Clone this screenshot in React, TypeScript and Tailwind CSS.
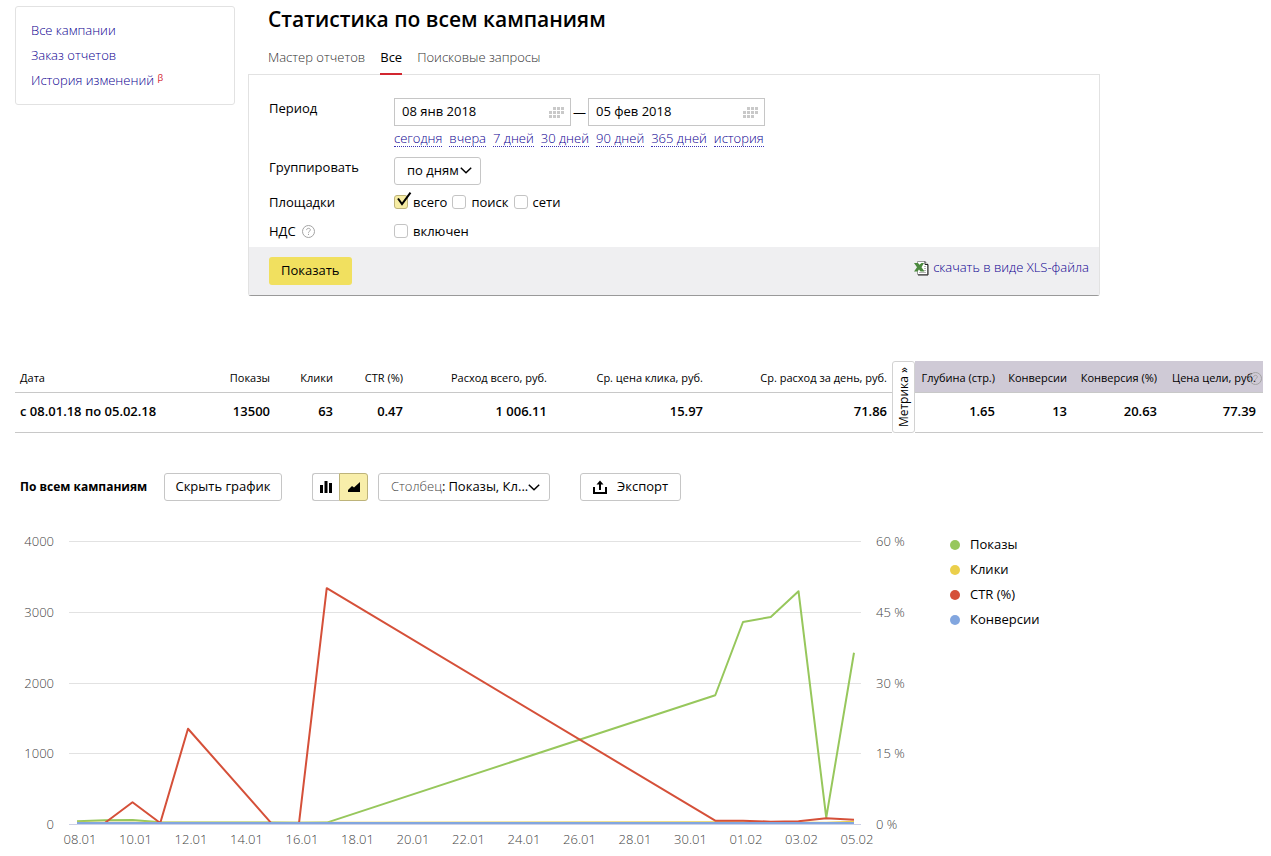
import { useState } from 'react'
import type { ReactNode } from 'react'
import clsx from 'clsx'

type Point = [day: number, value: number]

type Series = {
    name: string
    color: string
    dot: string
    max: number
    points: Point[]
}

// day 0 is 08.01, days without data are skipped
const series: Series[] = [
    {
        name: 'Показы',
        color: '#97c75c',
        dot: 'bg-[#97c75c]',
        max: 4000,
        points: [[0, 38], [1, 52], [2, 58], [3, 24], [4, 20], [7, 20], [8, 16], [9, 20], [23, 1820], [24, 2855], [25, 2926], [26, 3290], [27, 90], [28, 2420]],
    },
    {
        name: 'Клики',
        color: '#ebcf4b',
        dot: 'bg-[#ebcf4b]',
        max: 4000,
        points: [[0, 16], [8, 16], [9, 18], [23, 24], [27, 18], [28, 32]],
    },
    {
        name: 'CTR (%)',
        color: '#d55039',
        dot: 'bg-[#d55039]',
        max: 60,
        points: [[0, 0.2], [1, 0.2], [2, 4.6], [3, 0.2], [4, 20.2], [7, 0.2], [8, 0.2], [9, 50], [23, 0.7], [24, 0.7], [25, 0.5], [26, 0.6], [27, 1.2], [28, 0.9]],
    },
    {
        name: 'Конверсии',
        color: '#82a6df',
        dot: 'bg-[#82a6df]',
        max: 4000,
        points: [[0, 14], [28, 14]],
    },
]

const leftTicks = ['0', '1000', '2000', '3000', '4000']
const rightTicks = ['0 %', '15 %', '30 %', '45 %', '60 %']
const dates = ['08.01', '10.01', '12.01', '14.01', '16.01', '18.01', '20.01', '22.01', '24.01', '26.01', '28.01', '30.01', '01.02', '03.02', '05.02']

const periods = ['сегодня', 'вчера', '7 дней', '30 дней', '90 дней', '365 дней', 'история']

const columns = [
    { title: 'Показы', value: '13500' },
    { title: 'Клики', value: '63' },
    { title: 'CTR (%)', value: '0.47' },
    { title: 'Расход всего, руб.', value: '1 006.11' },
    { title: 'Ср. цена клика, руб.', value: '15.97' },
    { title: 'Ср. расход за день, руб.', value: '71.86' },
]

const metrikaColumns = [
    { title: 'Глубина (стр.)', value: '1.65' },
    { title: 'Конверсии', value: '13' },
    { title: 'Конверсия (%)', value: '20.63' },
    { title: 'Цена цели, руб.', value: '77.39' },
]

function HelpIcon() {
    return (
        <svg className="size-[13px]" viewBox="0 0 13 13" fill="none" stroke="#a3a3a3" aria-hidden="true">
            <circle cx="6.5" cy="6.5" r="6" />
            <path d="M4.6 5.1c0-1.1.8-1.8 1.9-1.8s1.9.7 1.9 1.6c0 1.3-1.9 1.4-1.9 2.8M6.5 8.8v1.2" />
        </svg>
    )
}

function Chevron() {
    return (
        <svg className="pointer-events-none absolute right-[9px] top-[10px] h-[7px] w-[12px]" viewBox="0 0 12 7" fill="none" stroke="#000" strokeWidth="1.5" aria-hidden="true">
            <path d="M.8.8 6 5.8 11.2.8" />
        </svg>
    )
}

function CalendarIcon() {
    return (
        <svg className="pointer-events-none absolute right-[7px] top-[9px] h-[11px] w-[15px]" viewBox="0 0 15 11" aria-hidden="true" fill="#c9c9c9">
            {[4, 8, 12].map((x) => <rect key={x} x={x} y="0" width="3" height="3" />)}
            {[0, 4, 8, 12].map((x) => <rect key={x} x={x} y="4" width="3" height="3" />)}
            {[0, 4, 8].map((x) => <rect key={x} x={x} y="8" width="3" height="3" />)}
        </svg>
    )
}

function XlsIcon() {
    return (
        <svg className="mt-[3px] h-[15px] w-[15px]" viewBox="0 0 15 15" aria-hidden="true">
            <path d="M3.5.5H11L13.500 3v10.500h-10z" fill="#fff" stroke="#9a9a9a" />
            <path d="M11 .5V3.500h3M14 3.500V14H4" fill="none" stroke="#222" />
            <path d="M10 5.500h2M10 7.500h2M9.500 9.500H12M5 11.500h7" stroke="#b5b5b5" />
            <path d="M0 2h4l1.500 1.800L7.500 2H10L7.500 6.200 10.500 10.500H6.500L5 8.600 3.500 10.500H0l3-4.300z" fill="#4c8a3f" />
        </svg>
    )
}

function DateField({ label, value }: { label: string; value: string }) {
    return (
        <span className="relative">
            <input
                type="text"
                aria-label={label}
                defaultValue={value}
                className="block h-7 w-[177px] border border-[#c6c6c6] bg-white pb-0.5 pl-[7px] pr-7 outline-none"
            />
            <CalendarIcon />
        </span>
    )
}

function Checkbox({ label, checked = false }: { label: string; checked?: boolean }) {
    const [on, setOn] = useState(checked)
    return (
        <label className="relative flex items-center gap-[5px]">
            <input
                type="checkbox"
                checked={on}
                onChange={(e) => setOn(e.target.checked)}
                className="size-3.5 appearance-none rounded-[3px] border border-[#c4c4c4] bg-white checked:border-[#bdb37a] checked:bg-[#f6eca4]"
            />
            {on && (
                <svg className="pointer-events-none absolute left-[3px] top-0 h-[15px] w-[15px]" viewBox="0 0 15 15" fill="none" stroke="#000" strokeWidth="2" aria-hidden="true">
                    <path d="M1 6.500 5 12 13.500.6" />
                </svg>
            )}
            {label}
        </label>
    )
}

function FormRow({ label, children, className }: { label: ReactNode; children: ReactNode; className?: string }) {
    return (
        <div className={clsx('flex', className)}>
            <div className="w-[125px] shrink-0">{label}</div>
            {children}
        </div>
    )
}

const px = (day: number) => 57 + day * 27.75
const py = (value: number, max: number) => 294 - (value / max) * 283

function Chart() {
    return (
        <svg className="w-full max-w-[900px]" viewBox="0 0 900 320" role="img" aria-label="Статистика по всем кампаниям">
            <g stroke="#e2e2e2">
                {leftTicks.map((tick, i) => (
                    <line key={tick} x1="49" x2="841" y1={Math.round(py(i, 4)) + 0.5} y2={Math.round(py(i, 4)) + 0.5} />
                ))}
            </g>
            <line x1="49" x2="841" y1="294.5" y2="294.5" stroke="#ccd0e6" />
            <g fill="none" strokeWidth="2" strokeLinejoin="round">
                {series.map((s) => (
                    <polyline key={s.name} stroke={s.color} points={s.points.map(([d, v]) => `${px(d)},${py(v, s.max)}`).join(' ')} />
                ))}
            </g>
            <g className="font-light" fill="#444" fontSize="13">
                {leftTicks.map((tick, i) => (
                    <text key={tick} x="34" y={Math.round(py(i, 4)) + 5} textAnchor="end">{tick}</text>
                ))}
                {rightTicks.map((tick, i) => (
                    <text key={tick} x="856" y={Math.round(py(i, 4)) + 5}>{tick}</text>
                ))}
                {dates.map((date, i) => (
                    <text key={date} x={px(i * 2) + 3} y="314" textAnchor="middle">{date}</text>
                ))}
            </g>
        </svg>
    )
}

function StatsTable() {
    return (
        <table className="w-full table-fixed border-separate border-spacing-0 text-right">
            <colgroup>
                <col />
                <col className="w-[60px]" />
                <col className="w-[63px]" />
                <col className="w-[70px]" />
                <col className="w-[144px]" />
                <col className="w-[156px]" />
                <col className="w-[184px]" />
                <col className="w-[23px]" />
                <col className="w-[85px]" />
                <col className="w-[72px]" />
                <col className="w-[90px]" />
                <col className="w-[101px]" />
            </colgroup>
            <tbody>
                <tr className="h-8 whitespace-nowrap text-[11px] [&>th]:border-b [&>th]:border-[#c8c8c8] [&>th]:pt-0.5 [&>th]:font-normal">
                    <th scope="col" className="px-[5px] text-left">Дата</th>
                    {columns.map((c) => (
                        <th key={c.title} scope="col" className="pr-[5px]">{c.title}</th>
                    ))}
                    <td rowSpan={2} className="p-0">
                        <button type="button" className="flex h-[72px] w-[23px] items-center justify-center rounded-[3px] border border-[#d2d2d2] bg-white text-xs">
                            <span className="rotate-180 [writing-mode:vertical-rl]">Метрика »</span>
                        </button>
                    </td>
                    {metrikaColumns.map((c, i) => (
                        <th key={c.title} scope="col" className="relative bg-[#cfcad6] pr-[5px] last:pr-[7px]">
                            {c.title}
                            {i === metrikaColumns.length - 1 && (
                                <span className="absolute right-px top-[11px]"><HelpIcon /></span>
                            )}
                        </th>
                    ))}
                </tr>
                <tr className="h-10 whitespace-nowrap font-semibold [&>td]:border-b [&>td]:border-[#c8c8c8] [&>td]:pb-1">
                    <td className="pl-[5px] text-left">с 08.01.18 по 05.02.18</td>
                    {[...columns, ...metrikaColumns].map((c) => (
                        <td key={c.title} className="pr-[5px] last:pr-[7px]">{c.value}</td>
                    ))}
                </tr>
            </tbody>
        </table>
    )
}

export default function App() {
    const [view, setView] = useState<'bar' | 'area'>('area')

    return (
        <div className="pl-[15px] pr-2 pt-1.5 font-['Open_Sans','Noto_Sans',sans-serif] text-[13px] leading-5 text-black">
            <div className="flex items-start gap-[13px]">
                <nav className="flex w-[220px] shrink-0 flex-col items-start rounded-[3px] border border-[#e2e2e2] px-[15px] pb-[11px] pt-[11px] font-light leading-[25px] text-[#0c0090]">
                    <a href="#">Все кампании</a>
                    <a href="#">Заказ отчетов</a>
                    <a href="#">История изменений <sup className="text-[9px] font-normal text-[#d22630]">β</sup></a>
                </nav>

                <main className="max-w-[852px] flex-1">
                    <h1 className="pl-5 text-[21px] font-semibold leading-[26px]">Статистика по всем кампаниям</h1>
                    <div className="mt-[15px] flex gap-[15px] pl-5 font-light text-[#333]">
                        <a href="#" className="pb-1.5">Мастер отчетов</a>
                        <a href="#" className="relative border-b-2 border-[#d22630] pb-1.5 font-normal text-black">Все</a>
                        <a href="#" className="pb-1.5">Поисковые запросы</a>
                    </div>

                    <form className="-mt-px rounded-b-[3px] border border-b-[#999] border-[#e2e2e2]" onSubmit={(e) => e.preventDefault()}>
                        <div className="px-5 pb-1.5 pt-[23px]">
                            <FormRow label="Период">
                                <div>
                                    <div className="flex items-center gap-0.5">
                                        <DateField label="Начало периода" value="08 янв 2018" />
                                        —
                                        <DateField label="Конец периода" value="05 фев 2018" />
                                    </div>
                                    <div className="mt-1 flex gap-[7px] font-light leading-4 text-[#0c0090]">
                                        {periods.map((p) => (
                                            <a key={p} href="#" className="whitespace-nowrap border-b border-dotted border-[#3d34b5]">{p}</a>
                                        ))}
                                    </div>
                                </div>
                            </FormRow>
                            <FormRow className="mt-2.5" label={<label htmlFor="group">Группировать</label>}>
                                <div className="relative">
                                    <select id="group" className="h-7 w-[87px] appearance-none rounded-[3px] border border-[#c6c6c6] bg-white pb-0.5 pl-3 outline-none">
                                        <option>по дням</option>
                                        <option>по неделям</option>
                                        <option>по месяцам</option>
                                    </select>
                                    <Chevron />
                                </div>
                            </FormRow>
                            <FormRow className="mt-[7px]" label="Площадки">
                                <div className="flex gap-[5px]">
                                    <Checkbox label="всего" checked />
                                    <Checkbox label="поиск" />
                                    <Checkbox label="сети" />
                                </div>
                            </FormRow>
                            <FormRow className="mt-[9px]" label={<span className="flex items-center gap-1.5">НДС <HelpIcon /></span>}>
                                <Checkbox label="включен" />
                            </FormRow>
                        </div>
                        <div className="flex items-start justify-between bg-[#efeff1] px-5 py-2.5 pr-2.5">
                            <button type="submit" className="h-7 rounded-[3px] bg-[#f1e05f] px-3 pb-0.5">Показать</button>
                            <a href="#" className="flex items-center gap-1 font-light text-[#0c0090]">
                                <XlsIcon />
                                скачать в виде XLS-файла
                            </a>
                        </div>
                    </form>
                </main>
            </div>

            <section className="mt-[65px]">
                <StatsTable />
            </section>

            <section className="mt-10 pl-[5px]">
                <div className="flex items-center">
                    <h2 className="w-36 text-xs font-bold">По всем кампаниям</h2>
                    <button type="button" className="h-7 w-[118px] rounded-[3px] border border-[#c6c6c6] pb-0.5">Скрыть график</button>
                    <div className="ml-[30px] flex">
                        <button
                            type="button"
                            aria-label="Столбцы"
                            onClick={() => setView('bar')}
                            className={clsx('flex h-7 w-[27px] items-center justify-center rounded-l-[3px] border', view === 'bar' ? 'border-[#bdb37a] bg-[#f8eeaa]' : 'border-r-0 border-[#c6c6c6]')}
                        >
                            <svg className="size-3" viewBox="0 0 12 12" aria-hidden="true">
                                <path d="M0 4h3v8H0zM4.500 0h3v12h-3zM9 2h3v10H9z" />
                            </svg>
                        </button>
                        <button
                            type="button"
                            aria-label="Линии"
                            onClick={() => setView('area')}
                            className={clsx('flex h-7 w-[29px] items-center justify-center rounded-r-[3px] border', view === 'area' ? 'border-[#bdb37a] bg-[#f8eeaa]' : 'border-l-0 border-[#c6c6c6]')}
                        >
                            <svg className="size-3" viewBox="0 0 12 12" aria-hidden="true">
                                <path d="M0 11V9l4-4 2 1.500L12 1v10z" />
                            </svg>
                        </button>
                    </div>
                    <label className="relative ml-2.5 flex h-7 w-[172px] items-center rounded-[3px] border border-[#c6c6c6] pb-0.5 pl-3">
                        <span className="font-light text-[#444]">Столбец</span>:
                        <select className="ml-[3px] flex-1 appearance-none bg-transparent outline-none">
                            <option>Показы, Кл...</option>
                        </select>
                        <Chevron />
                    </label>
                    <button type="button" className="ml-[30px] flex h-7 w-[101px] items-center gap-2.5 rounded-[3px] border border-[#c6c6c6] pb-0.5 pl-3">
                        <svg className="mt-0.5 h-3.5 w-3.5" viewBox="0 0 14 14" fill="none" stroke="#000" strokeWidth="2" aria-hidden="true">
                            <path d="M1 7v6h12V7M7 10V2" />
                            <path d="M3.500 4.500 7 .5l3.500 4z" fill="#000" stroke="none" />
                        </svg>
                        Экспорт
                    </button>
                </div>

                <div className="mt-[29px] flex items-start gap-[30px]">
                    <Chart />
                    <ul className="mt-0.5 shrink-0 leading-[25px]">
                        {series.map((s) => (
                            <li key={s.name} className="flex items-center gap-2.5">
                                <span className={clsx('size-2.5 rounded-full', s.dot)} />
                                {s.name}
                            </li>
                        ))}
                    </ul>
                </div>
            </section>
        </div>
    )
}
